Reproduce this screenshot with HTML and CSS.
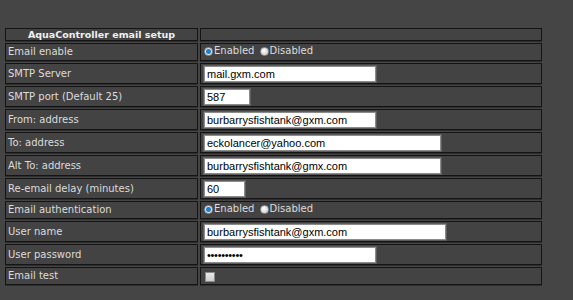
FILE: index.html
```html
<!DOCTYPE html>
<html lang="en">

<head>
  <meta charset="UTF-8">
  <title>AquaController email setup</title>
  <link rel="stylesheet" href="styles.css">
</head>

<body>
  <form id="emailForm" action="/email" method="post">
    <table class="setup">
      <thead>
        <tr>
          <th class="col1">AquaController email setup</th>
          <th></th>
        </tr>
      </thead>
      <tbody>
        <tr class="short">
          <td>Email enable</td>
          <td>
            <label class="opt"><input type="radio" name="enable" checked>Enabled</label>
            <label class="opt"><input type="radio" name="enable">Disabled</label>
          </td>
        </tr>
        <tr>
          <td>SMTP Server</td>
          <td><input class="w172" name="server" value="mail.gxm.com"></td>
        </tr>
        <tr>
          <td>SMTP port (Default 25)</td>
          <td><input class="w46" name="port" value="587"></td>
        </tr>
        <tr>
          <td>From: address</td>
          <td><input class="w172" name="from" value="burbarrysfishtank@gxm.com"></td>
        </tr>
        <tr>
          <td>To: address</td>
          <td><input class="w237" name="to" value="eckolancer@yahoo.com"></td>
        </tr>
        <tr>
          <td>Alt To: address</td>
          <td><input class="w237" name="altto" value="burbarrysfishtank@gmx.com"></td>
        </tr>
        <tr>
          <td>Re-email delay (minutes)</td>
          <td><input class="w41" name="delay" value="60"></td>
        </tr>
        <tr class="short">
          <td>Email authentication</td>
          <td>
            <label class="opt"><input type="radio" name="auth" checked>Enabled</label>
            <label class="opt"><input type="radio" name="auth">Disabled</label>
          </td>
        </tr>
        <tr>
          <td>User name</td>
          <td><input class="w242" name="user" value="burbarrysfishtank@gxm.com"></td>
        </tr>
        <tr>
          <td>User password</td>
          <td><input class="w172" type="password" name="pass" value="secretpwd1"></td>
        </tr>
        <tr class="short">
          <td>Email test</td>
          <td><input type="checkbox" name="test"></td>
        </tr>
      </tbody>
    </table>
  </form>
</body>

</html>
```

FILE: styles.css
```css
body {
  margin: 0;
  background: #454545;
  font-family: "DejaVu Sans", Verdana, sans-serif;
  font-size: 10px;
  color: #dcdcdc;
}

#emailForm {
  padding: 26px 0 0 3px;
  margin: 0;
}

.setup {
  width: 541px;
  border-collapse: separate;
  border-spacing: 2px;
}

.setup th,
.setup td {
  border: 1px solid #141414;
  background: #434343;
  box-shadow: 0 1px 0 #2e2e2e;
  padding: 0 2px;
  height: 19px;
  line-height: 12px;
  text-align: left;
  vertical-align: middle;
}

.setup th {
  height: 11px;
  line-height: 10px;
  font-weight: bold;
  text-align: center;
  color: #f0f0f0;
  font-size: 9.5px;
}

.setup th.col1 {
  width: 187px;
}

.setup tr.short td {
  height: 16px;
}

.setup input[type="text"],
.setup input:not([type]),
.setup input[type="password"] {
  box-sizing: border-box;
  height: 16px;
  margin: 0 0 0 1px;
  padding: 0 2px;
  border: 1px solid #8c8c8c;
  outline: 1px solid #5c5c5c;
  background: #fff;
  font-family: "Liberation Sans", Arial, sans-serif;
  font-size: 11px;
  color: #000;
  display: block;
}

.setup input[type="password"] {
  letter-spacing: -0.3px;
}

.w41 { width: 41px; }
.w46 { width: 46px; }
.w172 { width: 172px; }
.w237 { width: 237px; }
.w242 { width: 242px; }

.opt {
  display: inline-flex;
  align-items: center;
  margin-right: 1px;
}

.opt input[type="radio"] {
  appearance: none;
  width: 9px;
  height: 9px;
  margin: 0 1px 0 1px;
  border-radius: 50%;
  border: 1px solid #9a9a9a;
  background: radial-gradient(circle at 40% 35%, #ffffff, #c8c8c8);
}

.opt input[type="radio"]:checked {
  background: radial-gradient(circle, #1d7fd0 0, #1d7fd0 2px, #e6e6e6 3px, #c8c8c8 100%);
}

.setup input[type="checkbox"] {
  appearance: none;
  width: 10px;
  height: 10px;
  margin: 1px 0 0 2px;
  border: 1px solid #8a8a8a;
  background: linear-gradient(#e8e8e8, #cfcfcf);
  display: block;
}
```
